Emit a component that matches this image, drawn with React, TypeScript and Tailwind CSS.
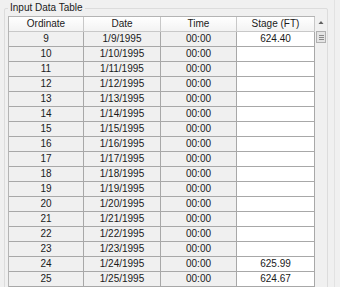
import React from "react";

const rows: { o: number; s: string }[] = [];
for (let i = 9; i <= 25; i++) {
  rows.push({ o: i, s: i === 9 ? "624.40" : i === 24 ? "625.99" : i === 25 ? "624.67" : "" });
}

export default function App() {
  return (
    <div
      className="relative w-[340px] h-[287px] overflow-hidden bg-[#f0f0f0] text-[10px] text-[#1a1a1a]"
      style={{ fontFamily: '"Liberation Sans", Arial, sans-serif' }}
    >
      {/* group box border */}
      <div className="absolute left-[4px] top-[8px] w-[324px] h-[290px] border border-[#dcdcdc] rounded-[2px]" />
      <div className="absolute left-[334px] top-0 w-[1px] h-[287px] bg-[#e2e2e2]" />
      <div className="absolute left-[8px] top-[2px] px-[2px] bg-[#f0f0f0] leading-[12px]">Input Data Table</div>

      <div className="absolute left-[8px] top-[16px] flex">
        <div className="flex flex-col border-l border-t border-[#b4b4b4]">
          <div className="grid grid-cols-[75px_77px_76px_78px] h-[15px] bg-gradient-to-b from-[#ffffff] to-[#f2f2f2]">
            {["Ordinate", "Date", "Time", "Stage (FT)"].map((h) => (
              <div key={h} className="flex items-center justify-center border-r border-b border-[#c8c8c8] leading-none">
                {h}
              </div>
            ))}
          </div>
          {rows.map((r) => (
            <div key={r.o} className="grid grid-cols-[75px_77px_76px_78px] h-[15px]">
              <div className="flex items-center justify-center border-r border-b border-[#a8a8a8] bg-[#f0f0f0] leading-none">{r.o}</div>
              <div className="flex items-center justify-center border-r border-b border-[#a8a8a8] bg-[#f0f0f0] leading-none">1/{r.o}/1995</div>
              <div className="flex items-center justify-center border-r border-b border-[#a8a8a8] bg-[#f0f0f0] leading-none">00:00</div>
              <div className="flex items-center justify-center border-r border-b border-[#a8a8a8] bg-white leading-none">{r.s}</div>
            </div>
          ))}
        </div>
        <div className="w-[12px] flex flex-col items-center bg-[#f0f0f0]">
          <svg width="12" height="14" viewBox="0 0 12 14" className="mt-[0px]">
            <path d="M6 5 L8.5 8 L3.5 8 Z" fill="#606060" />
          </svg>
          <div className="mt-[1px] w-[10px] h-[12px] bg-[#e4e4e4] border border-[#b0b0b0] flex flex-col items-center justify-center gap-[1px]">
            <div className="w-[5px] h-[1px] bg-[#8a8a8a]" />
            <div className="w-[5px] h-[1px] bg-[#8a8a8a]" />
            <div className="w-[5px] h-[1px] bg-[#8a8a8a]" />
          </div>
        </div>
      </div>
    </div>
  );
}
